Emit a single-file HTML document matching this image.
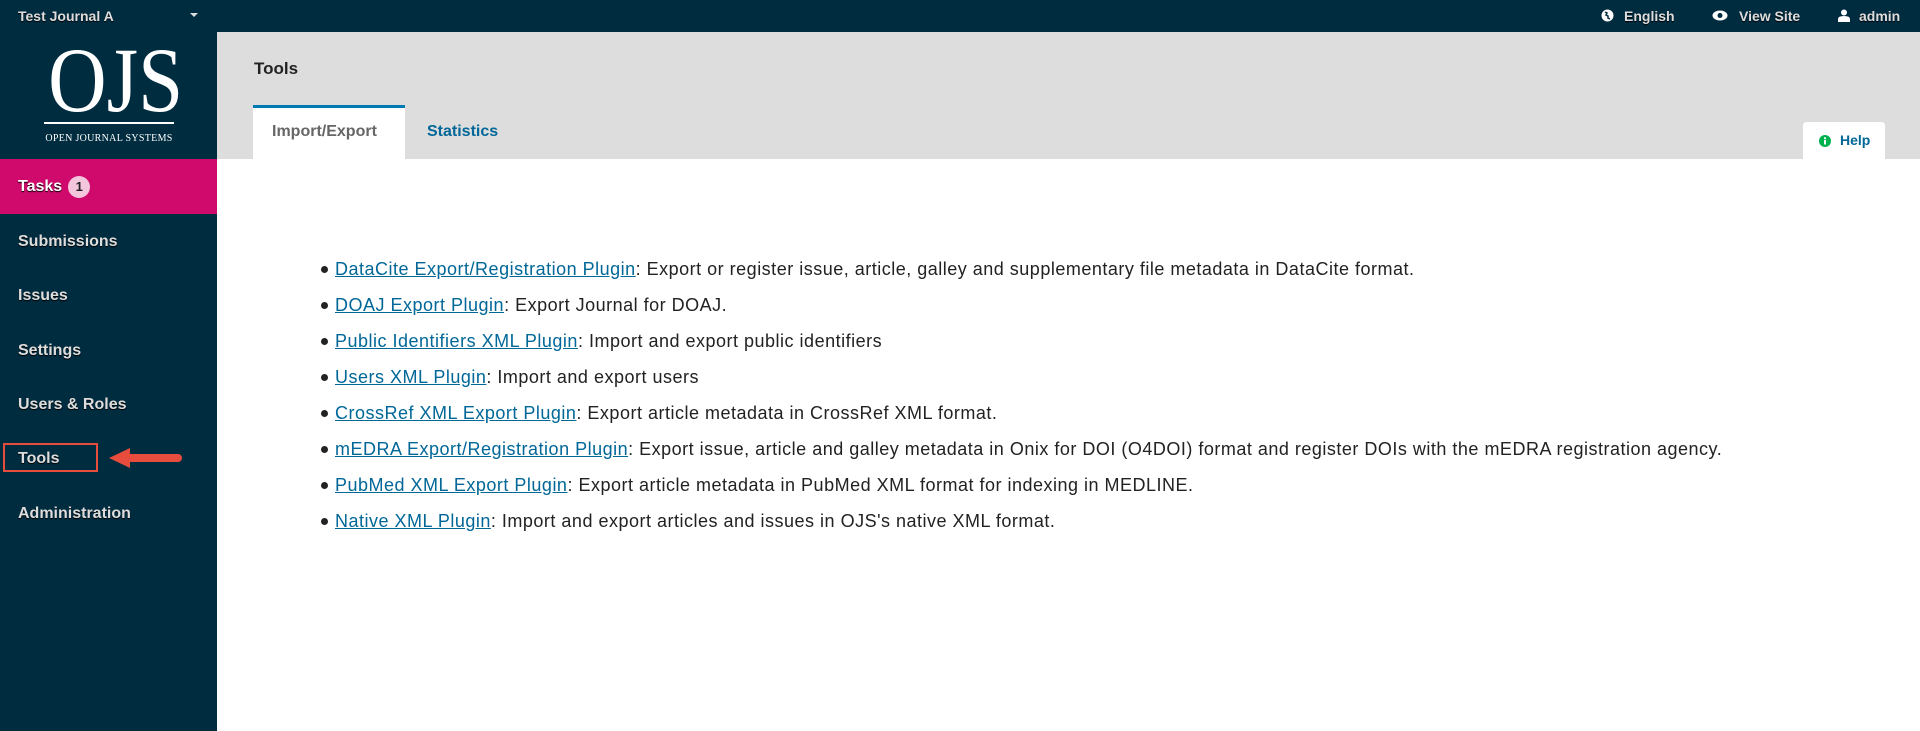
<!DOCTYPE html>
<html><head><meta charset="utf-8"><style>
*{margin:0;padding:0;box-sizing:border-box}
body{width:1920px;height:731px;background:#fff;font-family:"Liberation Sans",sans-serif;position:relative;overflow:hidden}
.top{position:absolute;left:0;top:0;width:1920px;height:32px;background:#002c40;color:#ddd;font-weight:bold;font-size:14px;text-shadow:0 1px 1px #000}
.top span{position:absolute;top:8px}
.side{position:absolute;left:0;top:32px;width:217px;height:699px;background:#002c40}
.logo{position:absolute;left:0;top:0;width:217px;height:127px;color:#fff;font-family:"Liberation Serif",serif}
.tasks{position:absolute;left:0;top:127px;width:217px;height:55px;background:#d00a6c;color:#fff;font-weight:bold;font-size:16px;padding:17px 0 0 18px;text-shadow:0 1px 1px #000}
.badge{display:inline-block;width:22px;height:22px;border-radius:11px;background:#f4c6dd;color:#222;text-align:center;font-size:13px;line-height:22px;margin-left:6px;text-shadow:none;vertical-align:middle}
.nav{position:absolute;left:18px;color:#ddd;font-weight:bold;font-size:16px;text-shadow:0 1px 1px #000}
.head{position:absolute;left:217px;top:32px;width:1703px;height:127px;background:#ddd}
.tab{position:absolute;font-weight:bold;font-size:16px}
ul{position:absolute;left:321px;top:259px;list-style:none}
li{height:36px;font-size:18px;letter-spacing:0.5px;color:#222;position:relative;padding-left:14px}
li:before{content:"";position:absolute;left:0;top:7px;width:7px;height:7px;border-radius:4px;background:#222}
a{color:#006798;text-decoration:underline}
</style></head><body>
<div class="top">
<span style="left:18px">Test Journal A</span>
<span style="left:190px;top:13px;width:0;height:0;border-left:4px solid transparent;border-right:4px solid transparent;border-top:4px solid #ddd"></span>
<svg style="position:absolute;left:1601px;top:9px" width="13" height="13" viewBox="0 0 13 13"><circle cx="6.5" cy="6.5" r="6" fill="#fff"/><path d="M4 3l2 1-1 2 2 1 0 2 2 1" stroke="#002c40" stroke-width="1.5" fill="none"/></svg>
<span style="left:1624px">English</span>
<svg style="position:absolute;left:1712px;top:10px" width="16" height="11" viewBox="0 0 16 11"><ellipse cx="8" cy="5.5" rx="7.5" ry="5" fill="#fff"/><circle cx="8" cy="5.5" r="2.5" fill="#002c40"/></svg>
<span style="left:1739px">View Site</span>
<svg style="position:absolute;left:1838px;top:9px" width="12" height="13" viewBox="0 0 12 13"><circle cx="6" cy="3.5" r="3" fill="#fff"/><path d="M0 13v-3q0-3 6-3t6 3v3z" fill="#fff"/></svg>
<span style="left:1859px">admin</span>
</div>
<div class="side">
<div class="logo">
<div style="position:absolute;left:40px;top:2px;width:136px;font-size:92px;line-height:92px;text-align:center;transform:scaleX(0.88);transform-origin:center top">OJS</div>
<div style="position:absolute;left:44px;top:90px;width:130px;height:2px;background:#fff"></div>
<div style="position:absolute;left:40px;top:101px;width:138px;font-size:10px;letter-spacing:0.3px;text-align:center">OPEN JOURNAL SYSTEMS</div>
</div>
<div class="tasks">Tasks<span class="badge">1</span></div>
<div class="nav" style="top:201px">Submissions</div>
<div class="nav" style="top:255px">Issues</div>
<div class="nav" style="top:310px">Settings</div>
<div class="nav" style="top:364px">Users &amp; Roles</div>
<div class="nav" style="top:418px">Tools</div>
<div class="nav" style="top:473px">Administration</div>
<div style="position:absolute;left:3px;top:411px;width:95px;height:29px;border:2px solid #e74c3c"></div>
<svg style="position:absolute;left:108px;top:414px" width="75" height="24" viewBox="0 0 75 24"><path d="M1 12L22 2v6h48a4 4 0 0 1 0 8H22v6z" fill="#e74c3c"/></svg>
</div>
<div class="head">
<div style="position:absolute;left:37px;top:27px;font-weight:bold;font-size:17px;color:#222">Tools</div>
<div style="position:absolute;left:36px;top:73px;width:152px;height:54px;background:#fff;border-top:3px solid #007ab2"></div>
<div class="tab" style="left:55px;top:91px;color:#666">Import/Export</div>
<div class="tab" style="left:210px;top:91px;color:#006798">Statistics</div>
<div style="position:absolute;left:1586px;top:90px;width:82px;height:37px;background:#fff;border-radius:3px 3px 0 0"></div>
<svg style="position:absolute;left:1602px;top:103px" width="12" height="12" viewBox="0 0 12 12"><circle cx="6" cy="6" r="6" fill="#00b24e"/><rect x="5" y="5" width="2" height="4.5" fill="#fff"/><circle cx="6" cy="3.2" r="1.1" fill="#fff"/></svg>
<div class="tab" style="left:1623px;top:100px;font-size:14px;color:#006798">Help</div>
</div>
<ul>
<li><a>DataCite Export/Registration Plugin</a>: Export or register issue, article, galley and supplementary file metadata in DataCite format.</li>
<li><a>DOAJ Export Plugin</a>: Export Journal for DOAJ.</li>
<li><a>Public Identifiers XML Plugin</a>: Import and export public identifiers</li>
<li><a>Users XML Plugin</a>: Import and export users</li>
<li><a>CrossRef XML Export Plugin</a>: Export article metadata in CrossRef XML format.</li>
<li><a>mEDRA Export/Registration Plugin</a>: Export issue, article and galley metadata in Onix for DOI (O4DOI) format and register DOIs with the mEDRA registration agency.</li>
<li><a>PubMed XML Export Plugin</a>: Export article metadata in PubMed XML format for indexing in MEDLINE.</li>
<li><a>Native XML Plugin</a>: Import and export articles and issues in OJS's native XML format.</li>
</ul>
</body></html>
